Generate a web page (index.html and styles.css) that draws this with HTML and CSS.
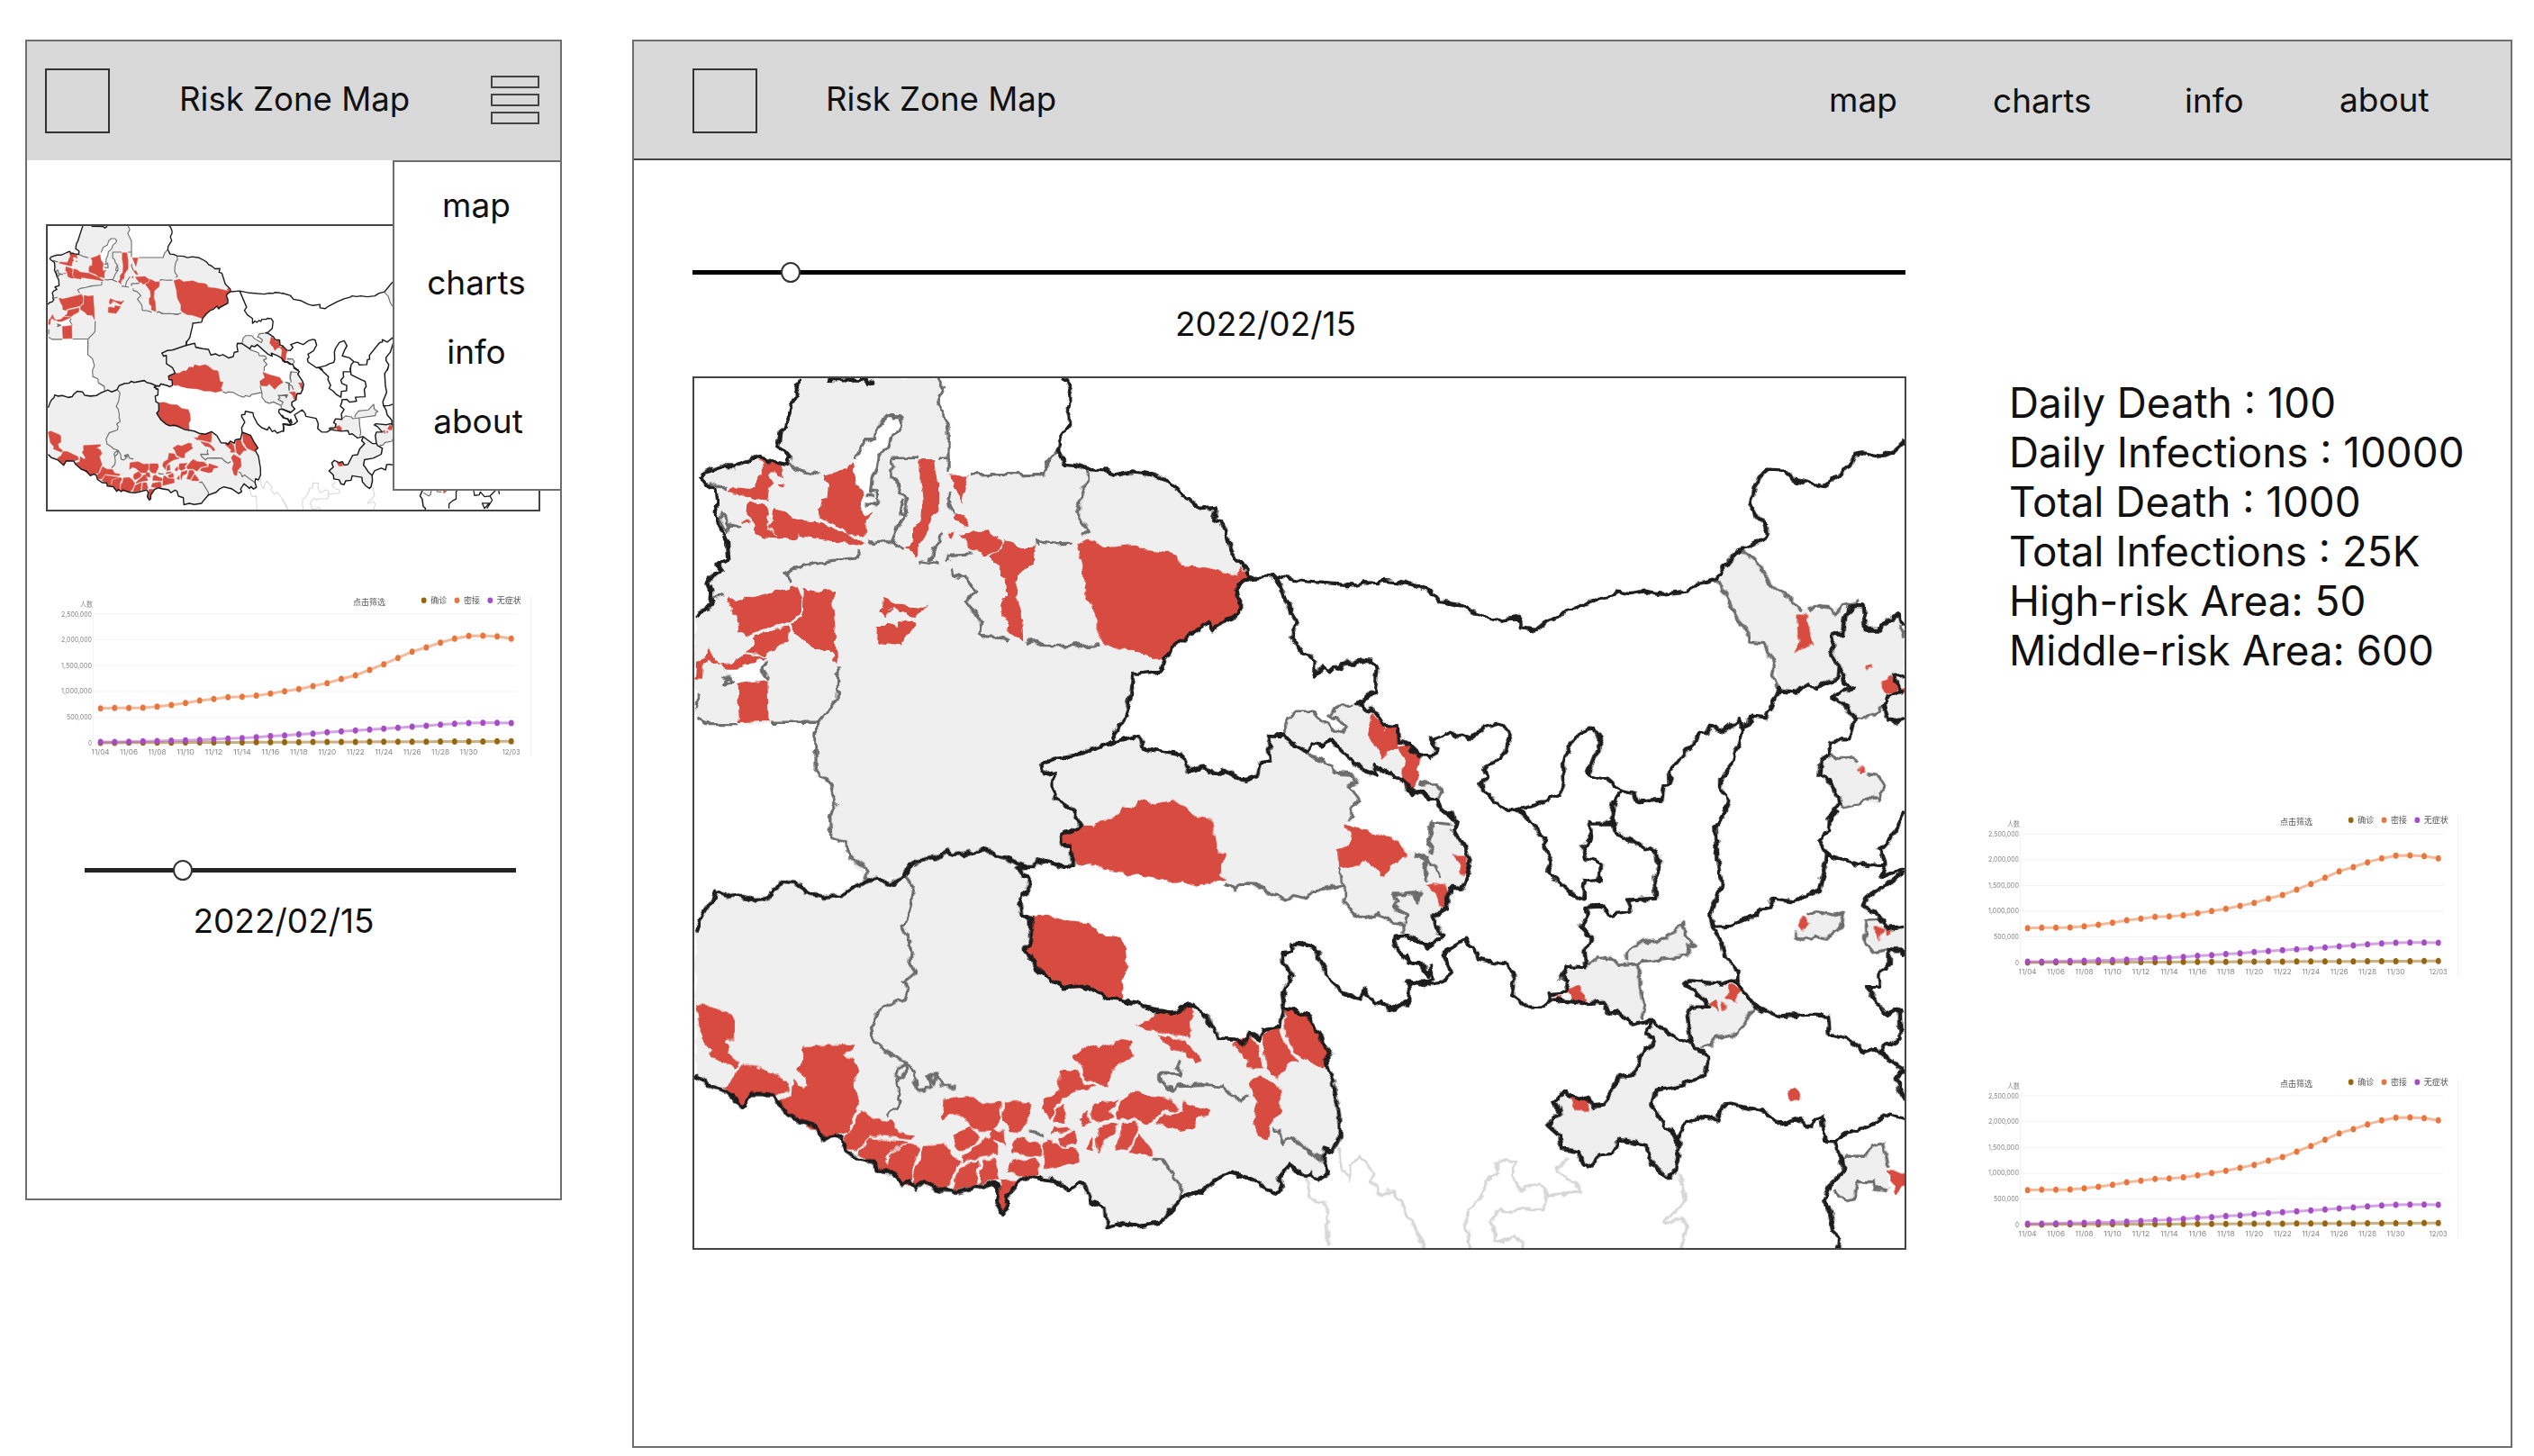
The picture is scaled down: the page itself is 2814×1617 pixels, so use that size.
FILE: index.html
```
<!DOCTYPE html>
<html lang="en">
<head>
<meta charset="utf-8">
<title>Risk Zone Map</title>
<link rel="stylesheet" href="styles.css">
</head>
<body>
<svg class="defs" width="0" height="0" aria-hidden="true">
  <defs>
    <!-- gives borders an irregular, surveyed edge -->
    <filter id="rough" x="0" y="0" width="100%" height="100%" color-interpolation-filters="sRGB">
      <feTurbulence type="fractalNoise" baseFrequency=".09" numOctaves="2" seed="4" result="n"/>
      <feDisplacementMap in="SourceGraphic" in2="n" scale="9" xChannelSelector="R" yChannelSelector="G"/>
    </filter>
    <g id="risk-map">
      <!-- land -->
      <g class="land">
        <g transform="translate(750 410) scale(.33333)">
          <path d="M412,30 870,30 888,65 868,108 905,185 905,350 1225,350 1240,300 1270,272 1300,315 1400,335 1400,1260 465,1260 465,1180 100,1183 60,1160 60,828 103,800 118,780 103,710 150,675 130,650 172,635 168,575 140,510 125,480 130,450 125,400 78,362 90,345 195,325 280,288 310,305 370,318 375,290 340,262 348,205 360,190Z"/>
          <path class="hole" d="M597,295 620,245 660,225 675,180 700,158 740,158 752,180 745,200 715,225 705,260 670,295 665,330 650,360 645,385 640,420 660,460 620,490 615,470 620,405 600,385 595,340 585,320ZM160,1008 280,965 280,1000 305,1035 205,1048 185,1030Z"/>
        </g>
        <g transform="translate(1130 410) scale(.33333)">
          <path d="M0,350 85,350 100,300 130,270 160,318 225,333 295,338 330,352 380,343 450,353 530,400 610,465 660,462 652,500 680,510 715,620 768,698 725,740 740,815 648,872 630,845 560,890 485,970 475,1008 385,1018 355,1165 320,1215 320,1270 0,1270Z"/>
          <path d="M885,1220 895,1170 920,1145 985,1145 1010,1175 1080,1215 1092,1190 1040,1160 1060,1125 1145,1120 1200,1155 1265,1190 1268,1260 1070,1260 1035,1235 1010,1250 980,1245 960,1265Z"/>
        </g>
        <g transform="translate(750 810) scale(.33333 .37628)">
          <path d="M463,-10 463,122 510,160 530,220 510,262 513,318 565,340 570,375 632,445 760,437 780,400 905,370 1035,355 1155,403 1300,410 1325,398 1310,350 1380,330 1390,-10Z"/>
          <path d="M62,600 128,485 265,507 305,500 355,452 410,458 430,487 550,490 665,440 705,458 760,437 780,400 905,370 1035,355 1155,403 1135,415 1175,435 1170,485 1140,505 1178,560 1180,625 1160,650 1240,740 1290,762 1390,770 1390,1380 1350,1342 1305,1362 1175,1322 1140,1335 1100,1420 1085,1432 1060,1340 940,1365 800,1355 755,1352 655,1290 560,1245 548,1205 488,1212 340,1110 320,1080 245,1078 218,1118 160,1070 62,1020Z"/>
        </g>
        <g transform="translate(1130 810) scale(.33333 .37628)">
          <path d="M0,-10 320,-10 320,38 405,20 415,55 485,68 545,75 568,125 615,115 655,132 690,122 750,152 795,140 805,100 842,95 838,20 885,22 962,75 1050,105 1058,130 1120,135 1132,158 1100,170 1137,210 1108,235 1108,270 1068,400 1085,462 980,480 960,500 900,505 790,460 690,457 400,430 180,398 155,410 60,385 50,405 -5,405Z"/>
          <path d="M1068,400 1095,290 1150,320 1290,370 1365,380 1380,360 1385,642 1290,612 1280,580 1200,548 1160,560 1120,545 1085,505Z"/>
          <path d="M885,20 890,-5 1260,-5 1290,50 1280,150 1240,130 1180,108 1190,135 1110,90 1040,32 980,42 962,70Z"/>
          <path d="M-5,430 35,435 32,485 5,495 12,545 40,560 42,625 20,650 60,705 110,745 150,762 230,765 300,795 400,810 450,830 510,838 575,815 630,852 670,915 720,918 745,930 815,890 870,880 885,820 970,848 1000,900 1045,962 1018,985 1050,1035 1070,1140 1072,1205 1050,1250 1020,1240 1030,1315 1000,1332 960,1325 905,1285 870,1330 880,1355 850,1372 780,1330 700,1312 655,1332 620,1362 545,1385 475,1460 400,1470 295,1472 290,1410 240,1395 225,1350 165,1365 140,1340 -5,1320Z"/>
        </g>
        <g transform="translate(1560 410) scale(.36352 .33333)">
          <path d="M950,705 1020,605 1065,632 1120,720 1215,805 1300,795 1335,790 1385,765 1405,790 1412,870 1455,870 1510,820 1530,850 1530,1165 1475,1165 1465,1120 1440,1150 1378,1165 1310,1098 1370,1060 1328,985 1325,1030 1260,1060 1195,1078 1145,1068 1132,980 1095,915 1055,910 1020,840 1000,800 985,745Z"/>
          <path d="M1305,1285 1370,1290 1400,1335 1450,1355 1467,1385 1455,1440 1340,1462 1300,1370 1272,1355 1275,1305ZM40,1385 95,1380 115,1410 98,1435 45,1412Z"/>
        </g>
        <g transform="translate(1560 900) scale(.36352 .33333)">
          <path d="M-5,120 60,165 75,100 85,42 150,48 200,170 172,265 140,262 130,325 90,350 90,385 118,420 75,458 -5,422Z"/>
          <path d="M495,520 555,520 590,490 655,518 715,510 730,660 722,700 700,715 650,672 610,640 545,645 490,620 500,575 478,560ZM675,505 680,480 710,440 800,430 850,372 855,420 890,448 870,455 865,488Z"/>
          <path d="M755,700 738,740 765,772 720,825 700,885 655,890 610,985 575,990 560,955 530,965 485,942 460,970 475,1010 435,1050 475,1090 480,1130 530,1140 545,1180 575,1190 590,1150 640,1145 650,1098 740,1115 745,1160 775,1200 810,1228 825,1210 838,1150 835,1095 770,1010 755,990 765,935 845,920 920,880 930,820 885,790 840,772Z"/>
          <path d="M875,770 865,690 875,655 930,655 885,600 855,575 1018,575 1070,660 1015,750 955,760 905,792ZM1190,425 1195,390 1235,350 1260,340 1310,350 1340,342 1335,390 1290,432 1250,420 1225,435ZM1410,368 1450,365 1475,395 1530,388 1530,460 1435,475 1410,435ZM1340,1155 1410,1155 1430,1120 1465,1112 1480,1190 1480,1265 1440,1260 1435,1240 1385,1240 1378,1290 1360,1305 1310,1270 1345,1205Z"/>
        </g>
      </g>
      <!-- high-risk areas -->
      <g class="risk">
        <g transform="translate(750 410) scale(.33333)">
          <path d="M280,302 350,325 355,360 335,345 315,345 310,365 320,380 305,395 300,435 270,432 170,405 185,395 250,402 265,385 275,355 285,345ZM242,445 285,458 308,468 303,525 328,560 290,558 262,545 252,500 238,480ZM322,468 350,475 385,500 475,510 560,548 625,585 610,588 560,578 450,560 400,552 390,572 375,565 335,560 312,525 318,495ZM495,358 550,340 585,320 597,380 620,410 612,470 622,490 648,478 632,500 628,560 600,548 575,550 540,520 475,495 475,460 482,435 505,435 510,385ZM812,302 858,302 870,380 870,465 832,520 830,560 800,585 797,620 770,595 790,575 790,535 818,500 822,430 812,370Z"/>
          <path d="M915,355 970,355 950,440ZM935,480 950,485 970,522 955,525 930,495ZM945,550 1040,543 1085,575 1075,598 1020,622 1010,605 980,600ZM1095,570 1150,600 1188,595 1185,645 1135,690 1130,760 1145,800 1150,900 1105,880 1110,850 1085,820 1085,765 1100,750 1095,690 1045,622 1085,600ZM215,510 240,508 235,516ZM910,545 925,543 915,563ZM340,388 355,385 350,395Z"/>
          <path d="M170,765 215,772 300,750 400,725 415,760 412,815 380,842 250,875 243,888 210,880 208,845 190,815ZM425,735 470,745 518,738 520,800 525,850 530,980 505,935 460,935 430,905 390,880 388,850 422,825ZM260,888 375,862 370,905 330,925 295,950 230,942 255,925ZM220,952 290,960 200,1000 160,1000 148,985 190,980ZM105,932 125,975 145,990 120,985 102,965 85,985 82,1030 65,1030 68,985 88,965ZM205,1053 300,1042 303,1172 212,1175Z"/>
          <path d="M688,768 740,790 800,800 830,788 797,830 750,805 720,790 705,800 680,810ZM672,855 705,855 730,865 740,840 795,850 750,918 670,908ZM680,810 720,800 690,825Z"/>
        </g>
        <g transform="translate(1130 410) scale(.33333)">
          <path d="M195,585 250,570 290,597 385,587 440,608 510,615 530,630 540,655 620,662 735,688 740,660 768,690 725,735 740,775 738,815 650,870 630,845 560,890 485,970 380,935 330,932 280,905 265,885 265,830 230,765 220,680Z"/>
          <path d="M1180,1155 1215,1185 1225,1200 1200,1225 1205,1260 1185,1245 1165,1220ZM1232,1190 1262,1195 1265,1265 1215,1265 1222,1225Z"/>
        </g>
        <g transform="translate(750 810) scale(.33333 .37628)">
          <path d="M62,820 85,810 180,845 190,860 190,910 160,925 170,960 205,982 195,1000 115,970 120,950 85,915ZM212,995 255,995 360,1040 370,1065 330,1078 245,1078 218,1115 155,1055 195,1030ZM420,940 590,932 590,945 550,960 590,980 605,1015 580,1040 605,1110 590,1140 570,1190 520,1195 488,1212 335,1100 382,1085 387,1040 425,1065 440,1050 405,1000 420,985ZM610,1130 660,1155 710,1155 735,1190 790,1200 780,1212 640,1198 600,1242 560,1240 560,1205 590,1180Z"/>
          <path d="M640,1210 770,1225 705,1245 695,1285 715,1305 660,1305 650,1275 605,1255ZM715,1250 790,1228 808,1240 785,1285 785,1345 755,1350 705,1290ZM825,1232 880,1228 910,1245 938,1280 915,1330 890,1360 795,1345 798,1290 815,1275ZM890,1095 970,1085 1030,1110 1075,1105 1078,1150 1050,1185 1000,1185 950,1145 915,1135 885,1155ZM1090,1105 1170,1105 1180,1130 1150,1190 1110,1185 1088,1160ZM930,1200 975,1175 1008,1205 985,1230 940,1248 925,1230ZM955,1268 1010,1225 1035,1202 1070,1245 1065,1255 1010,1262 950,1280Z"/>
          <path d="M943,1300 1005,1275 1000,1320 995,1350 920,1358ZM1022,1275 1055,1275 1072,1325 1012,1342ZM1055,1180 1088,1190 1092,1225 1045,1215ZM1125,1215 1150,1205 1165,1220 1215,1235 1215,1258 1120,1253ZM1118,1280 1200,1268 1208,1315 1170,1322 1105,1310ZM1082,1335 1135,1335 1100,1385 1100,1420 1085,1430 1068,1400Z"/>
        </g>
        <g transform="translate(1130 810) scale(.33333 .37628)">
          <path d="M207,290 250,290 285,268 320,268 350,232 390,238 405,212 450,225 510,212 540,225 590,260 640,268 662,365 692,370 670,430 688,445 640,455 620,462 560,450 500,450 440,432 330,422 265,408 235,395 210,400 182,390 178,350 140,330 150,310ZM45,555 95,550 160,570 230,575 270,605 340,618 355,650 362,710 345,740 350,795 300,790 230,765 150,762 110,745 60,705 22,650 42,625ZM1095,280 1150,300 1265,328 1295,370 1250,400 1215,435 1160,385 1135,405 1070,400 1065,360 1115,330Z"/>
          <path d="M445,850 480,830 510,838 575,818 575,875 568,912 475,892 425,888 400,870 435,870ZM465,905 545,920 590,955 610,980 595,990 560,955 510,945ZM712,930 765,905 800,940 812,1000 765,1000 775,980ZM820,900 870,885 882,925 930,985 905,985 860,1030 828,1005 820,950ZM890,830 970,850 1000,900 1040,960 1010,995 935,965 895,905ZM800,1020 870,1060 875,1130 840,1160 830,1210 805,1205 785,1150 800,1100 775,1050Z"/>
          <path d="M185,962 235,935 270,945 345,918 375,925 370,945 385,965 305,1010 300,1050 270,1050 225,1030 205,985ZM145,1010 200,1015 215,1045 250,1055 190,1070 150,1090 115,1120 105,1155 80,1120 90,1090 135,1065ZM120,1165 125,1125 150,1112 155,1160ZM120,1182 165,1178 170,1185 115,1195ZM135,1210 185,1190 190,1225 145,1230ZM95,1210 140,1238 195,1240 198,1275 82,1300 85,1240ZM205,1155 230,1130 235,1160 215,1170ZM250,1105 330,1100 300,1130 315,1145 270,1165 245,1150Z"/>
          <path d="M325,1130 370,1080 390,1065 430,1085 500,1090 535,1120 465,1135 430,1170 385,1150 330,1150ZM550,1105 640,1130 635,1140 595,1145 580,1180 545,1185 460,1165 475,1145 545,1132ZM270,1180 330,1165 320,1195 280,1210 270,1250 262,1215ZM350,1165 385,1162 400,1185 360,1245 325,1240 340,1200ZM370,1255 405,1200 445,1245 445,1258ZM225,1240 245,1210 250,1245Z"/>
          <path d="M1175,0 1205,0 1225,10 1255,0 1262,30 1240,65 1215,85 1200,50 1180,30ZM1265,55 1290,50 1335,85 1320,180 1300,180 1280,155 1290,80Z"/>
        </g>
        <g transform="translate(1560 410) scale(.36352 .33333)">
          <path d="M1203,820 1225,822 1252,925 1230,920 1195,942 1210,910 1200,865ZM1460,1040 1490,1028 1510,1060 1500,1080 1475,1080ZM1412,989H1430V996H1412ZM1398,1327 1408,1337 1398,1347 1389,1337ZM0,1258 15,1270 45,1298 40,1325 25,1335 35,1365 25,1410 0,1395ZM1518,1065H1530V1083Z"/>
        </g>
        <g transform="translate(1560 900) scale(.36352 .33333)">
          <path d="M150,155 185,155 195,210 175,212 165,175ZM65,250 120,245 130,275 128,325 110,320 95,275ZM495,600 530,588 552,615 550,645 515,635ZM460,625 480,622 475,640ZM1000,582 1028,600 1010,637 978,622ZM933,645 953,637 956,672ZM970,642 985,652 974,665ZM1215,358 1237,378 1217,397 1205,382ZM1442,395 1462,395 1450,430ZM1470,398 1490,402 1478,414ZM508,962 530,970 562,962 560,998 525,1000ZM1175,940 1190,925 1210,945 1205,970 1185,978 1175,960ZM1478,1203 1530,1220 1530,1250 1500,1278 1498,1245ZM0,140 5,150 0,158Z"/>
        </g>
      </g>
      <!-- foreign rivers and borders -->
      <g class="faint">
        <path transform="translate(1130 810) scale(.33333 .37628)" d="M960,1330 975,1385 990,1400 1028,1395 1035,1530M1070,1235 1080,1300 1105,1330 1110,1290 1135,1260 1190,1315 1175,1335 1210,1378 1245,1362 1285,1410 1330,1480 1350,1530"/>
        <path transform="translate(1560 900) scale(.36352 .33333)" d="M0,1340 40,1410 60,1462M200,1462 188,1390 190,1335 215,1320 250,1260 250,1235 285,1215 285,1170 340,1175 330,1215 355,1270 410,1240 432,1260 430,1310 415,1335 345,1330 320,1345 295,1328 262,1370 275,1430 300,1440 340,1420 370,1462M432,1285 535,1275 530,1240 500,1235 465,1200 500,1160M840,1210 858,1305 795,1370 795,1380 850,1362 865,1385 845,1462"/>
      </g>
      <!-- prefecture borders -->
      <g class="minor">
        <path transform="translate(750 410) scale(.33333)" d="M870,30 888,65 868,108 885,140 905,185 905,345M905,295H870M805,295H715V358L735,370 740,400 765,430 768,480 740,520 715,578M755,435 745,480 765,485M375,320 420,340 470,352M597,300 620,245 660,225 675,180 700,158 740,158 755,180 745,200 715,225 705,260 670,295 665,330 650,360 645,405 665,408 668,455 630,450M630,418 655,420M635,575 660,578 700,572 760,598M605,598 603,630 580,632 500,640 440,655 385,665 360,682 382,712M805,640 880,652M845,640 855,595 890,545M905,640V617L985,612M920,665 925,688 960,695 1000,738 965,772 1010,835 1015,887 1060,890 1110,905M1160,912 1185,902 1220,920 1330,922 1380,930M980,350H1225L1240,305 1270,272M910,415 905,435 925,485M538,995 535,1105 467,1178H310M205,1182H100L65,1160M67,1080 68,1130M465,1180 463,1280M295,970 280,998 305,1035M152,1025 190,1040 155,1052 165,1035M105,380 160,395M155,475 140,500 165,545 175,520 210,522 165,510 160,475M115,765 155,755"/>
        <path transform="translate(1130 410) scale(.33333)" d="M885,1220 895,1170 920,1145 985,1145 1010,1175 1080,1215 1092,1190 1062,1165 1040,1160 1060,1125 1110,1120M225,335 232,370 215,395 203,450 203,500 232,540 210,553M55,590 60,575 120,582 180,580M25,905 45,900 70,920 150,920 225,928 268,915"/>
        <path transform="translate(750 810) scale(.33333 .37628)" d="M463,0V122L510,160 530,220 510,262 513,318 565,340 570,375 630,408 632,445M765,440 788,465 775,540 750,590 770,610 782,665 778,690 792,720 755,748 770,770 762,800 680,825 665,850 648,882 657,925 700,950 720,968 770,985 795,1020 800,1062 825,1070 850,1055 835,1030 870,1020 885,1055 925,1062M770,985 735,1005 728,1025 740,1035 765,1015 765,990M735,1035 742,1080 735,1115 703,1140M840,1025 860,1045 875,1020M1175,1188 1195,1196 1230,1196"/>
        <path transform="translate(1130 810) scale(.33333 .37628)" d="M962,75 1050,105 1058,130 1120,135 1132,158 1100,170 1137,210 1108,235 1108,270M1068,405 1085,465M690,457 725,468 740,458 790,460 850,490 900,505 920,490 960,500 980,480 1085,462V505L1120,545 1160,560 1200,548 1280,580V605M1285,575 1298,550 1250,525 1268,510 1250,488 1340,490 1330,510 1320,480M1325,368 1365,380 1355,400 1360,440M1370,350V300L1380,270M538,978 530,1000 543,1020 465,1018 475,1040 515,1070 530,1055 620,1052 680,1055 715,1085 745,1100 770,1083M850,1180 870,1185 885,1222 910,1205 960,1240 1010,1270M450,1272 480,1270 500,1300 545,1365 540,1385M1340,158 1380,160"/>
        <path transform="translate(1560 410) scale(.36352 .33333)" d="M950,705 985,745 1000,800 1020,840 1055,880 1055,910 1095,915 1132,980 1125,1025 1145,1068M1025,605 1065,632 1095,670 1120,720 1180,765 1215,805M1235,805 1255,788 1300,795 1322,815 1335,790 1380,780 1385,765M1378,1165 1440,1150 1465,1120M1305,1285 1330,1298 1370,1290 1385,1318M1415,1350 1450,1355 1467,1385 1455,1440 1440,1420 1390,1450 1340,1462 1330,1440M45,1385 95,1380 115,1410 98,1435M1515,850 1530,900"/>
        <path transform="translate(1560 900) scale(.36352 .33333)" d="M85,150 75,100 85,42 140,48M30,145 60,165 90,185 105,225M65,170V235M0,280 50,275 35,305M560,515 590,490 640,500 655,518 715,510 865,488 870,455 890,448 855,420 850,372 800,430 710,440 680,480 675,505M715,510 720,590 730,660 722,695M905,792 935,785 955,760 1015,750 1070,660M1235,350 1260,340 1310,350 1340,342 1335,390 1290,432 1250,420 1225,435 1190,425 1190,405M1450,365 1410,368V435L1435,475 1480,465M1340,1155 1410,1155 1430,1120 1465,1112 1480,1190M1480,1265 1440,1260 1435,1240 1385,1240 1378,1290 1360,1305 1310,1270"/>
      </g>
      <!-- province borders -->
      <g class="major">
        <path transform="translate(750 410) scale(.33333)" d="M412,30 385,110 360,190 348,205 340,262 362,275 375,290 370,318 330,312 310,305 295,310 280,288 250,300 195,325 150,325 90,345 78,362 95,380 125,400 130,450 125,480 140,510 150,545 168,575 172,635 130,650 150,675 118,690 103,710 112,740 110,765 118,780 103,800 75,808 60,828M500,33 620,36 635,50 660,34"/>
        <path transform="translate(1130 410) scale(.33333)" d="M145,30 160,40 175,80 175,105 158,140 172,180 150,215 135,240 133,270 155,315 190,318 225,333 295,338 330,352 380,343 450,353 500,380 530,400 545,422 575,435 610,465 660,462 652,500 680,510 715,620 765,670 768,698 735,720 725,740 740,775 740,815 725,822 660,858 648,872 630,845 590,878 560,890 520,925 485,970 475,1008 385,1018 382,1050 355,1165 320,1215 320,1250M768,698 860,690 960,710 1110,722 1160,712 1200,715 1215,705 1270,710 1300,717M860,690 930,855 908,890 940,935 990,970 990,1020 1015,995 1035,1010 1055,990 1075,1000 1085,978 1130,978 1140,968 1180,972 1198,1000 1190,1070 1150,1108 1120,1118 1145,1120 1200,1155 1220,1185 1265,1190 1268,1240 1305,1250"/>
        <path transform="translate(750 810) scale(.33333 .37628)" d="M62,600 80,555 95,530 120,510 128,485 165,495 205,490 265,507 305,500 320,478 355,452 410,458 430,487 490,495 550,490 590,468 665,440 705,458 760,437 780,400 840,380 880,378 905,362 930,372 1035,355 1065,375 1100,380 1155,403 1190,403M1155,403 1135,415 1175,435M62,1020 95,1050 160,1070 218,1118 245,1078 320,1080 340,1110 400,1155 450,1170 488,1212 520,1198 548,1205 560,1245 610,1275 655,1278 660,1305 720,1310 755,1352 775,1335 800,1355 820,1340 885,1362 940,1365 985,1358 1060,1340 1075,1365 1065,1400 1085,1432 1100,1420 1100,1385 1140,1335 1175,1322"/>
        <path transform="translate(1130 810) scale(.33333 .37628)" d="M320,0V38L405,20 415,55 485,68 545,75 568,125 615,115 655,132 690,122 750,152 795,140 805,100 842,95 832,40 838,20 885,22 962,70 980,42 1010,50 1040,32 1080,65 1110,90 1150,120 1190,135 1180,108 1240,130 1280,150 1315,190 1345,185 1380,210M320,38 180,80 130,85 72,108 90,135 118,130 118,203 180,240 207,288 140,315 145,345 175,350 180,398 155,410 120,398 60,385 50,405H10M10,430 35,435 32,485 5,495 12,545 40,560 42,625 20,650 60,705 110,745 150,762 200,758 230,765 300,795 400,810 450,830 510,838 575,815 630,852 670,915 720,918 745,930 765,900 805,920 815,890 870,880 885,820 880,780 912,728 880,680 880,665 912,660 918,632 995,645 1000,675 1040,745 1085,780 1140,800 1158,772 1190,815 1215,805 1240,828 1305,805 1300,745 1340,748 1380,760M885,820 970,848 1000,900 1045,962 1018,985 1050,1035 1070,1140 1072,1205 1050,1250 1020,1240 1015,1275 1030,1315 1000,1332 975,1310 960,1325 905,1285 870,1330 880,1355 850,1372 780,1330 700,1312 655,1332 620,1362 545,1385 490,1440 475,1460 400,1470 350,1460 295,1472 290,1410 240,1395 225,1350 205,1342 165,1365 140,1340 80,1330 35,1320M1380,642 1290,612 1260,615 1255,640 1300,690 1350,700 1360,720 1380,715"/>
        <path transform="translate(1560 410) scale(.36352 .33333)" d="M0,712 75,735 105,775 170,787 240,825 285,838 350,828 352,862 400,870 430,845 510,800 580,768 630,755 650,740 690,748 730,740 790,750 860,740 900,713 950,700 1020,605 1075,580 1110,550 1105,515 1080,495 1057,448 1085,360 1112,335 1160,338 1190,368 1280,390 1330,355 1365,315 1378,285 1400,280 1455,290 1495,275 1530,238M0,1250 15,1260 45,1292 75,1295 100,1265 80,1235 140,1212 195,1235 245,1195 285,1182 305,1188 320,1240 290,1300 240,1333 250,1365 235,1380 240,1412 320,1472 405,1450 440,1430 480,1415 488,1385 485,1310 495,1275 530,1215 575,1195 602,1248 580,1290 558,1350 625,1370 665,1408 705,1418 715,1442 785,1438 792,1388 812,1385 810,1345 850,1290 905,1215 930,1210 930,1185 975,1210 1025,1165 1035,1205 1005,1310 965,1365 965,1400 990,1440 975,1500M665,1408 640,1440 632,1500M340,1470 370,1500M1030,1195 1050,1185 1060,1155 1108,1160 1145,1068 1195,1078 1240,1048 1260,1060 1325,1030 1328,985 1305,942 1312,885 1340,880 1345,830 1370,790 1405,790 1412,870 1455,870 1460,855 1510,820 1530,850M1328,985 1350,1050 1370,1060 1310,1098 1355,1130 1378,1165 1362,1235 1320,1235 1298,1250 1303,1285 1275,1305 1272,1355 1300,1370 1330,1440 1295,1500M1530,1018 1500,1020 1505,1050 1520,1075 1475,1095 1465,1120 1475,1165 1500,1175 1530,1165M0,1400 45,1412 70,1435 98,1435 110,1465 155,1500M1530,1480 1518,1500"/>
        <path transform="translate(1560 900) scale(.36352 .33333)" d="M105,0 160,40 145,65 185,130 200,170 190,220 172,265 140,262 130,300 130,325 90,350 90,385 118,420 75,458 0,422M0,480 20,512 50,520 70,560 80,525 90,560 60,585 8,575 15,610 10,655M60,585 110,575 142,545 115,480 185,430 212,460 220,495 315,515 335,570 330,620 370,655 415,655 445,635 440,615 490,610 500,575 478,560 495,520 555,525 550,470 575,425 540,390 555,350 555,325 600,322 625,350 690,340 680,300 770,295 762,220 780,190 770,140 720,115 640,72 632,0M632,42H567L570,95 545,125 555,160 600,180 597,235 550,240 545,300 500,270 475,240 435,210 450,180 425,120 430,90 380,40 365,10 325,-5M450,630 545,645 610,640 625,680 650,672 700,715 750,700 840,772 875,770 865,690 875,655 930,655 885,600 855,582 870,570 970,580 1000,570 1018,575 1018,535 975,480 965,430 940,385 935,345 970,250 958,180 952,60 975,20 985,0M1018,575 1070,655 1150,690 1240,682 1295,685 1300,745 1370,770 1405,808 1440,795 1455,815 1525,865M945,388 995,385 1075,350 1090,330 1120,325 1122,298 1190,305 1270,265 1290,150 1268,105 1298,70 1300,40 1325,0M1290,150 1380,180 1415,188 1470,178 1455,130 1500,75 1530,10M1470,180 1460,225 1530,195M1530,205 1490,235 1415,290 1405,325 1440,340 1475,395 1530,388M1530,490 1515,465 1482,465 1482,520 1455,540 1450,590 1412,590 1440,640 1480,680 1515,665 1518,760 1470,785 1455,815M1525,865 1505,900 1530,965"/>
        <path transform="translate(1560 900) scale(.36352 .33333)" d="M755,700 738,740 765,772 720,825 700,885 655,890 610,985 575,990 560,955 530,965 485,942 460,970 475,1010 435,1050 475,1090 480,1130 530,1140 545,1180 575,1190 590,1150 640,1145 650,1098 740,1115 745,1160 775,1200 810,1228 825,1210 838,1150 835,1095 800,1060 770,1010 755,990 765,935 845,920 920,880 930,820 885,790 875,770M835,1095 860,1045 920,1020 960,1040 970,985 1000,982 1105,1008 1150,1050 1205,1030 1230,1060 1275,1020 1290,1110 1310,1110 1350,1080 1430,1050 1480,1015 1530,1028M1310,1110 1335,1160 1345,1205 1298,1255 1280,1305 1300,1335 1310,1410 1330,1430 1325,1470"/>
        <path class="coast" transform="translate(1943 1269)" d="M180,108 180,92 192,82 204,76 204,52 212,40 222,46 232,40M262,38 266,64 282,62 286,52 300,68 318,66 326,80 308,108M318,66 336,48 346,38 350,60M292,90H316L300,108Z"/>
      </g>
    </g>
  </defs>
</svg>

<section class="frame phone">
  <header class="bar phone-bar">
    <div class="logo"></div>
    <h1 class="title phone-title">Risk Zone Map</h1>
    <div class="burger"><span></span><span></span><span></span></div>
    <nav class="menu">
      <a class="m1">map</a>
      <a class="m2">charts</a>
      <a class="m3">info</a>
      <a class="m4">about</a>
    </nav>
  </header>
  <svg class="map phone-map" viewBox="769 420 1656 961" preserveAspectRatio="none"><use href="#risk-map"/></svg>
  <div class="chart phone-chart"></div>
  <div class="slider phone-slider"><span class="knob"></span></div>
  <p class="date phone-date">2022/02/15</p>
</section>

<section class="frame desktop">
  <header class="bar desktop-bar">
    <div class="logo"></div>
    <h1 class="title desktop-title">Risk Zone Map</h1>
    <nav class="links">
      <a>map</a>
      <a class="low">charts</a>
      <a class="low">info</a>
      <a>about</a>
    </nav>
  </header>
  <main class="content">
    <div class="left">
      <div class="slider"><span class="knob"></span></div>
      <p class="date">2022/02/15</p>
      <svg class="map desktop-map" viewBox="769 420 1347 967" preserveAspectRatio="none"><use href="#risk-map" filter="url(#rough)"/></svg>
    </div>
    <aside class="right">
      <ul class="stats">
        <li>Daily Death : 100</li>
        <li>Daily Infections : 10000</li>
        <li>Total Death : 1000</li>
        <li>Total Infections : 25K</li>
        <li>High-risk Area: 50</li>
        <li>Middle-risk Area: 600</li>
      </ul>
      <div class="chart"></div>
      <div class="chart"></div>
    </aside>
  </main>
</section>
<script src="charts.js"></script>
</body>
</html>
```
FILE: styles.css
```
* { box-sizing: border-box; }

body {
  margin: 0;
  padding: 44px 0 0 28px;
  display: flex;
  align-items: flex-start;
  gap: 78px;
  background: #fff;
  color: #111;
  font-family: Inter, "Noto Sans CJK SC", sans-serif;
  font-size: 37px;
  line-height: 44px;
}

.defs { position: absolute; }

.frame { border: 2px solid #6e6e6e; background: #fff; }
.phone { width: 596px; height: 1289px; }
.desktop { width: 2088px; height: 1564px; }

.bar { position: relative; display: flex; align-items: flex-start; background: #d9d9d9; }
.phone-bar { height: 132px; padding: 30px 23px 0 20px; }
.desktop-bar { height: 132px; padding: 30px 0 0 65px; border-bottom: 2px solid #444; }

.logo { width: 72px; height: 72px; border: 2px solid #333; }
.title { margin: 12px 0 0; font-size: 36.6px; font-weight: 400; line-height: 44px; white-space: nowrap; }
.phone-title { margin-left: 77px; }
.desktop-title { margin-left: 76px; }

.burger { margin: 8px 0 0 auto; display: flex; flex-direction: column; gap: 6px; }
.burger span { width: 54px; height: 14px; border: 2px solid #444; }

.menu {
  position: absolute;
  top: 132px;
  right: -2px;
  width: 188px;
  height: 367px;
  padding: 26px 2px 0 0;
  display: flex;
  flex-direction: column;
  align-items: center;
  background: #fff;
  border: 2px solid #6e6e6e;
}
.m2 { margin-top: 42px; }
.m3 { margin-top: 33px; }
.m4 { margin-top: 33px; padding-left: 4px; }

.links { margin: 13px 90px 0 auto; display: grid; grid-template-columns: 182px 213px 172px 100px; }
.low { padding-top: 1px; }

.map { display: block; border: 2px solid #444; }
.phone-map { width: 549px; height: 319px; margin: 71px 0 0 21px; }
.desktop-map { width: 1348px; height: 970px; margin-top: 36px; }

.land { fill: #efefef; }
.hole { fill: #fff; }
.risk { fill: #d84b40; stroke: #d84b40; stroke-width: 4; }
.faint, .minor, .major { fill: none; stroke-linejoin: round; }
.faint { stroke: #d6d6d6; stroke-width: 9; }
.minor { stroke: #6c6c6c; stroke-width: 10; }
.major { stroke: #1c1c1c; stroke-width: 12.5; }
.coast { stroke-width: 4; }

.slider { position: relative; width: 1347px; height: 5px; background: #000; }
.knob {
  position: absolute;
  left: 98px;
  top: -9px;
  width: 22px;
  height: 23px;
  border: 2px solid #333;
  border-radius: 50%;
  background: #fff;
}
.phone-slider { width: 479px; margin: 124px 0 0 64px; background: #222; }
.date { margin: 33px 0 0; padding-right: 76px; text-align: center; }
.phone-date { margin-top: 32px; padding: 0 22px 0 0; }

.content { display: flex; padding: 122px 0 0 65px; }
.left { width: 1349px; }
.right { margin: 120px 0 0 82px; }
.stats { margin: 0 0 153px 31px; padding: 0; list-style: none; font-size: 45.8px; line-height: 55.1px; white-space: nowrap; }

.chart { width: 532px; height: 180px; margin-bottom: 111px; }
.chart svg { display: block; overflow: visible; }
.phone-chart { margin: 92px 0 0 30px; }
.chart text { font-family: Inter, "Noto Sans CJK SC", sans-serif; font-size: 8px; fill: #888; }
.chart .label { font-size: 9px; fill: #555; }
.chart .soft { filter: blur(.5px); }
.chart .grid { stroke: #f3f3f3; stroke-width: 1; }
.chart .axis { stroke: #e6e6e6; stroke-width: 1; }
```
FILE: charts.js
```
// Daily totals in thousands, 11/04 to 12/03.
const series = [
  { name: "确诊", color: "#96650f", x: 410.7, values: Array.from({ length: 30 }, (_, i) => 6 + i) },
  { name: "密接", color: "#e8763c", x: 447.5, values: [674,680,680,686,709,738,779,826,855,890,901,919,959,1006,1047,1105,1163,1244,1314,1419,1529,1651,1773,1855,1948,2023,2076,2081,2070,2023] },
  { name: "无症状", color: "#a54cc4", x: 484.3, values: [23,23,29,35,41,47,52,64,76,87,99,116,134,151,169,186,209,227,244,262,279,297,320,337,360,378,390,395,395,390] }
];
const X = i => 51.6 + i * 15.73;
const Y = v => 165.3 - v * 143.3 / 2500;

function drawChart() {
  let s = '<svg width="532" height="180" viewBox="0 0 532 180">';
  s += '<path class="axis" d="M43.5,22V165.3M529.5,2V180" opacity=".5"/><g class="soft">';
  for (let v = 0; v <= 2500; v += 500) {
    s += `<path class="grid" d="M43.5,${Y(v)}H514"/>`;
    s += `<text x="42" y="${Y(v) + 2.5}" text-anchor="end" textLength="${v === 0 ? 4 : v < 1000 ? 28 : 34}" lengthAdjust="spacingAndGlyphs">${(v * 1000).toLocaleString("en-US")}</text>`;
  }
  for (let i = 0; i < 30; i++) {
    if ((i % 2 === 0 && i < 28) || i === 29) {
      const day = i + 4;
      const text = day > 30 ? "12/0" + (day - 30) : "11/" + String(day).padStart(2, "0");
      s += `<text x="${X(i)}" y="177.5" text-anchor="middle" textLength="20" lengthAdjust="spacingAndGlyphs">${text}</text>`;
    }
  }
  s += '<text x="29" y="14" textLength="14" lengthAdjust="spacingAndGlyphs">人数</text>';
  s += '<text class="label" x="332" y="11.5">点击筛选</text>';
  for (const line of series) {
    s += `<ellipse cx="${line.x}" cy="6.7" rx="2.9" ry="3.3" fill="${line.color}"/>`;
    s += `<text class="label" x="${line.x + 7.5}" y="9.5">${line.name}</text>`;
  }
  for (const line of series) {
    const pts = line.values.map((v, i) => `${X(i)},${Y(v)}`).join(" ");
    s += `<polyline points="${pts}" fill="none" stroke="${line.color}" stroke-width="3" opacity=".5"/>`;
    line.values.forEach((v, i) => {
      s += `<ellipse cx="${X(i)}" cy="${Y(v)}" rx="2.9" ry="3.5" fill="${line.color}"/>`;
    });
  }
  return s + "</g></svg>";
}

document.querySelectorAll(".chart").forEach(el => { el.innerHTML = drawChart(); });
```
